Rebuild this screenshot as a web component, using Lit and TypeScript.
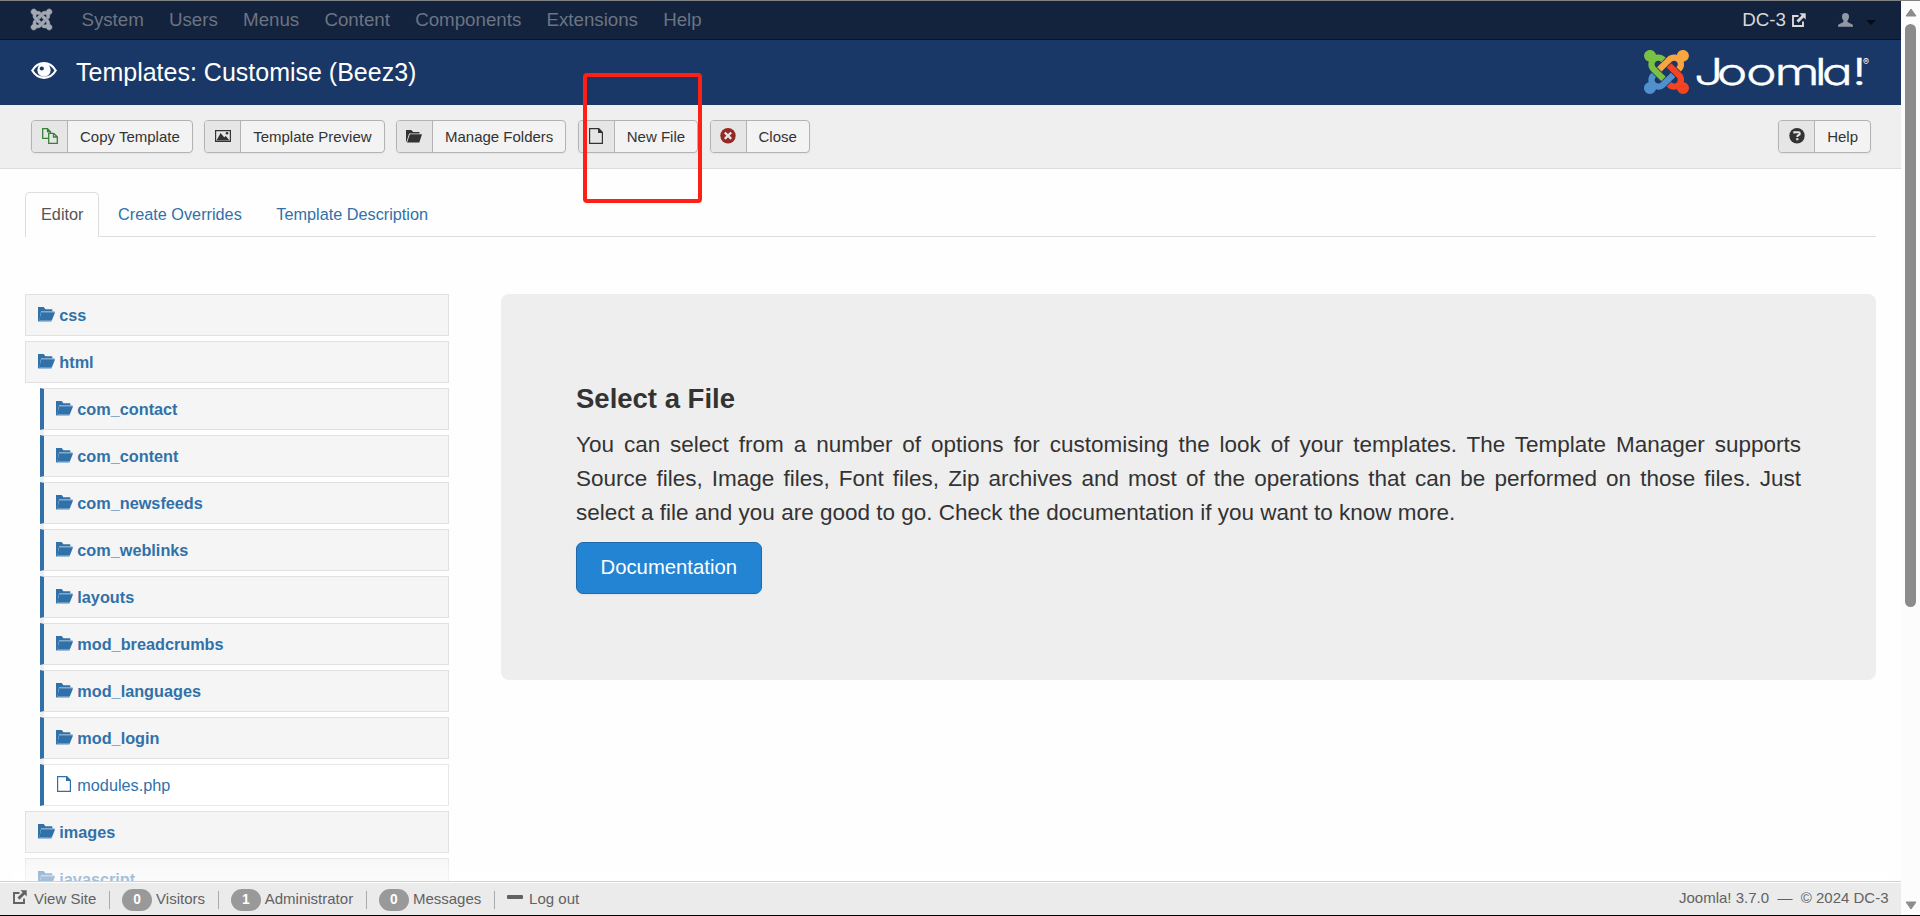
import { LitElement, html, svg, css } from "lit";
import { customElement, property } from "lit/decorators.js";

const JOOMLA = [
  ["#7ac143", "M.6 92.1C.6 58.8 27.4 32 60.4 32c30 0 54.5 21.9 59.2 50.2 32.6-7.6 67.1.6 96.5 30l-44.3 44.3c-20.5-20.5-42.6-16.3-55.4-3.5-14.3 14.3-14.3 37.9 0 52.2l99.5 99.5-44 44.3c-87.7-87.2-49.7-49.7-99.8-99.7-26.8-26.5-35-64.8-24.8-98.9C20.4 144.6.6 120.7.6 92.1z"],
  ["#f9a541", "M130.1 208.5l44.3 44.3c10-10 89.7-89.7 99.7-99.8 14.3-14.3 37.6-14.3 51.9 0 12.8 12.8 17 35-3.5 55.4l44 44.3c31.2-31.2 38.5-67.6 28.9-101.2 29.2-4.1 51.9-29.2 51.9-59.5 0-33.2-26.8-60.1-59.8-60.1-30.3 0-55.4 22.5-59.5 51.6-33.8-9.9-71.7-1.5-98.3 25.1-18.3 19.1-71.1 71.5-99.6 99.9z"],
  ["#f44321", "M396.4 360.7c8.2-32.7-.9-68.5-26.3-93.9-11.8-12.2 5 4.7-99.5-99.7l-44.3 44.3 99.7 99.7c14.3 14.3 14.3 37.6 0 51.9-12.8 12.8-35 17-55.4-3.5l-44 44.3c27.6 30.2 68 38.8 102.7 28 5.5 27.4 29.7 48.1 58.9 48.1 33 0 59.8-26.8 59.8-60.1 0-30.2-22.5-55-51.6-59.1z"],
  ["#5091cd", "M312.1 307.6l-44-44.3c-87 86.4-50.4 50.4-99.7 99.8-14.3 14.3-37.6 14.3-51.9 0-13.1-13.4-16.9-35.3 3.2-55.4l-44-44.3c-30.2 30.2-38 65.2-29.5 98.3-26.7 6-46.2 29.9-46.2 58.2C0 453.2 26.8 480 59.8 480c28.6 0 52.5-19.8 58.6-46.7 32.7 8.2 68.5-.6 94.2-26 32.1-32 12.2-12.4 99.5-99.7z"],
];

const ICONS: Record<string, [number, number, unknown]> = {
  joomla: [21, 21, svg`<g transform="translate(0 -1.500) scale(.0469)" fill="currentColor" stroke="currentColor" stroke-width="13">${JOOMLA.map(([, d]) => svg`<path d=${d} />`)}</g>`],
  eye: [26, 17, svg`<path fill="none" stroke="currentColor" stroke-width="2.200" d="M1.300 8.500C4 3.900 8 1.200 13 1.200s9 2.700 11.700 7.300C22 13.100 18 15.800 13 15.800S4 13.100 1.300 8.500z"/><circle cx="13" cy="8" r="6.700" fill="currentColor"/><circle cx="10.800" cy="6.500" r="2.100" fill="#1a3867"/>`],
  copy: [16, 16, svg`<path fill="none" stroke="currentColor" stroke-width="1.300" d="M6 10.300H.7V.7h4.800l3 3V5M5.500.7v3h3M6.700 5.300h5l3.600 3.500v6.500H6.700zM11.500 5.300v3.700h3.800"/>`],
  image: [16, 12, svg`<path fill="none" stroke="currentColor" stroke-width="1.200" d="M.6.6h14.800v10.800H.6z"/><path fill="currentColor" d="M1.500 10.500 5.600 3l3.600 4.200 1.600-1.300 3.700 4.600z"/><circle cx="12" cy="3.200" r="1.300" fill="currentColor"/>`],
  folder: [16, 13, svg`<path fill="currentColor" d="M0 0h5.300l1.800 1.900h6.400v1.500H3.100L.9 10.500 0 12.200z"/><path fill="currentColor" d="M3.800 4.300H16L13.300 12.500H1.100z"/>`],
  treefolder: [17, 15, svg`<path fill="currentColor" d="M0 0h5.700l1.700 2.300h6.900v2H3L1.400 14H0z"/><path fill="currentColor" opacity=".55" d="M2.300 4.200h14.300v2H2.300zM0 13.200h13.500v1.500H0z"/><path fill="currentColor" d="M3 5.400h14L13.800 13.500H1.300z"/>`],
  file: [14, 16, svg`<path fill="none" stroke="currentColor" stroke-width="1.200" d="M.6.6h9l3.800 3.800v10.900H.6z"/><path fill="currentColor" d="M9 .3h1l3.700 3.700v1H9z"/>`],
  close: [16, 16, svg`<circle cx="8" cy="7.700" r="7.700" fill="currentColor"/><path stroke="#e6e6e6" stroke-width="2.300" d="M4.800 4.500l6.400 6.400M11.200 4.500l-6.400 6.400"/>`],
  help: [16, 16, svg`<circle cx="8" cy="7.700" r="7.700" fill="currentColor"/><path fill="none" stroke="#e6e6e6" stroke-width="2" d="M5.300 5.600V4.200h4.200q1.300 0 1.300 1.200 0 1.300-1.100 1.600-1.400.4-1.400 1.900"/><path fill="#e6e6e6" d="M7.200 10.200h2.200v2H7.200z"/>`],
  out: [14, 14, svg`<path fill="none" stroke="currentColor" stroke-width="1.900" d="M6.500 3H1v10h10V8.500"/><path fill="currentColor" d="M7.500.3H13.700V6.500L11.600 4.500 6.500 9.700 4.500 7.600 9.600 2.400z"/>`],
  user: [15, 14, svg`<path fill="currentColor" d="M7.500 0C9.800 0 11 1.400 11 3.500c0 1.600-.6 3-1.500 3.900v1.700l5 2.500q.5.300.5 2.100H0q0-1.800.5-2.100l5-2.500V7.400C4.600 6.500 4 5.100 4 3.500 4 1.400 5.200 0 7.500 0z"/>`],
  minus: [16, 4, svg`<rect width="16" height="4" rx="1" fill="currentColor"/>`],
};

const icon = (name: string) => {
  const [w, h, body] = ICONS[name];
  return html`<svg class="icon" width=${w} height=${h} viewBox="0 0 ${w} ${h}">${body}</svg>`;
};

const base = css`
  * { box-sizing: border-box; }
  .icon { display: block; flex: none; overflow: visible; }
`;

@customElement("tool-button")
class ToolButton extends LitElement {
  @property() icon = "";
  @property() label = "";
  @property() tone = "#333";
  static styles = [base, css`
    :host { display: block; }
    .btn { display: flex; height: 33px; border: 1px solid #b3b3b3; border-radius: 4px; background: #f3f3f3; color: #333; font: 15px/31px "Liberation Sans", Arial, sans-serif; box-shadow: 0 1px 2px rgba(0,0,0,.05); white-space: nowrap; overflow: hidden; }
    .cell { display: flex; justify-content: center; align-items: center; width: 36px; padding-bottom: 1px; background: #e6e6e6; border-right: 1px solid #b3b3b3; }
    .label { padding: 0 12px; }
  `];
  render() {
    return html`<div class="btn"><span class="cell" style="color:${this.tone}">${icon(this.icon)}</span><span class="label">${this.label}</span></div>`;
  }
}

@customElement("file-tree")
class FileTree extends LitElement {
  static styles = [base, css`
    :host { display: block; width: 424px; }
    .list { display: flex; flex-direction: column; gap: 5px; }
    .nested { margin-left: 15px; background: linear-gradient(#eee, #eee) left / 4px 100% no-repeat; }
    .row { display: flex; gap: 4.300px; height: 42px; padding-left: 12px; border: 1px solid #e1e1e1; background: #f5f5f5; color: #3071a9; font: bold 16.250px/40px "Liberation Sans", Arial, sans-serif; }
    .row .icon { margin-top: 12px; }
    .nested .row { border-left: 4px solid #3071a9; }
    .row.file { background: #fff; font-weight: normal; border-color: #e8e8e8; border-left-color: #3071a9; padding-left: 13px; }
    .row.file .icon { margin: 11px 2px 0 0; }
  `];
  row(name: string) {
    const file = name.includes(".");
    return html`<div class="row ${file ? "file" : ""}">${icon(file ? "file" : "treefolder")}<span>${name}</span></div>`;
  }
  render() {
    const sub = ["com_contact", "com_content", "com_newsfeeds", "com_weblinks", "layouts", "mod_breadcrumbs", "mod_languages", "mod_login", "modules.php"];
    return html`<div class="list">
      ${["css", "html"].map((n) => this.row(n))}
      <div class="list nested">${sub.map((n) => this.row(n))}</div>
      ${["images", "javascript"].map((n) => this.row(n))}
    </div>`;
  }
}

@customElement("app-root")
class AppRoot extends LitElement {
  static styles = [base, css`
    :host { display: block; width: 1920px; height: 916px; overflow: hidden; position: relative; font-family: "Liberation Sans", Arial, sans-serif; font-size: 16.250px; color: #333; }
    .window { display: flex; height: 916px; border-top: 1px solid #7f8183; border-bottom: 1px solid #000; background: #fefefe; }
    .page { width: 1901px; height: 914px; display: flex; flex-direction: column; }
    .nav { flex: none; height: 39px; display: flex; align-items: center; padding: 0 25px 0 31px; background: #13223d; border-bottom: 1px solid #0b1525; color: #6b7482; font-size: 18.750px; letter-spacing: -.02px; }
    .nav .joomla { color: #a3a9b3; margin-right: 29.400px; padding-bottom: 1px; }
    .nav .menu { display: flex; gap: 25.200px; padding-bottom: 1px; }
    .nav .site { display: flex; gap: 6px; align-items: center; margin-left: auto; color: #d9d9d9; padding-bottom: 1px; }
    .nav .user { margin-left: 32px; color: #9098a4; }
    .caret { margin-left: 13px; border: 5px solid transparent; border-top-color: #060b14; border-bottom: 0; margin-top: 5px; }
    .header { flex: none; height: 65px; display: flex; align-items: center; padding: 0 30px 0 31px; background: #1a3867; color: #fff; }
    .header .eye { padding-bottom: 5px; }
    .title { margin: 0 0 2px 19px; font-weight: normal; font-size: 25px; line-height: 30px; }
    .brand { margin: 0 0 2px auto; display: block; overflow: visible; }
    .brand text { font-family: Inter, "Noto Sans", sans-serif; fill: #fff; }
    .word { font-size: 37px; font-weight: 300; font-feature-settings: "cv11"; stroke: #fff; stroke-width: .4px; }
    .reg { font-size: 9px; }
    .toolbar { flex: none; height: 64px; display: flex; gap: 11.400px; padding: 15px 30px 0 31px; background: #efefef; border-bottom: 1px solid #dcdcdc; }
    .toolbar .last { margin-left: auto; }
    .body { flex: 1; min-height: 0; overflow: hidden; padding: 23px 25px 0; }
    .tabs { display: flex; height: 45px; border-bottom: 1px solid #ddd; color: #3071a9; line-height: 42px; }
    .tab { padding: 0 15px; margin-right: 2.500px; border: 1px solid transparent; }
    .tab.active { height: 45px; margin-right: 2.600px; border-color: #ddd; border-bottom: 0; border-radius: 5px 5px 0 0; color: #555; background: #fefefe; }
    .cols { display: flex; gap: 52px; padding-top: 57px; align-items: flex-start; }
    .hero { width: 1375px; height: 386px; background: #eee; border-radius: 8px; padding: 85px 75px 0; }
    .hero h2 { margin: 0; font-size: 27.500px; line-height: 40px; }
    .hero p { margin: 9px 0 12px; font-size: 22.500px; line-height: 34px; text-align: justify; }
    .doc { display: inline-block; height: 52px; padding: 0 23.500px; border: 1px solid #1f6aab; border-radius: 7px; background: #2384d3; color: #fff; font-size: 20.310px; line-height: 48px; box-shadow: 0 1px 2px rgba(0,0,0,.05); }
    .status { position: relative; flex: none; height: 34px; display: flex; align-items: center; padding: 0 12.500px 0 13px; background: #ebebeb; border-top: 1px solid #d0d0d0; box-shadow: inset 0 1px 0 #fff, 0 -19px 19px rgba(255,255,255,.6); color: #626262; font-size: 15px; }
    .status .out { margin: 0 7px 3px 0; }
    .sep { width: 1px; height: 18px; background: #aaa; margin: 3px 12px 0 12.800px; }
    .badge { width: 30px; height: 22px; border-radius: 11px; background: #999; color: #fff; font-weight: bold; line-height: 21px; text-align: center; margin: 3px 4px 0 0; font-size: 13.750px; }
    .minus { margin: 0 6px 3px 0; }
    .copy-note { margin-left: auto; white-space: pre; padding-bottom: 2px; }
    .scroll { width: 19px; display: flex; flex-direction: column; align-items: center; padding: 7px 0 5px; background: #fcfcfc; }
    .thumb { width: 11px; height: 583px; border-radius: 6px; background: #8b8b8b; margin: 7px 0 auto; }
    .marker { position: absolute; left: 583px; top: 73px; width: 119px; height: 130px; border: 4px solid #ff2015; border-radius: 4px; }
  `];

  render() {
    const menu = ["System", "Users", "Menus", "Content", "Components", "Extensions", "Help"];
    const counts = [["0", "Visitors"], ["1", "Administrator"], ["0", "Messages"]];
    return html`
      <div class="window">
        <div class="page">
          <nav class="nav">
            <span class="joomla">${icon("joomla")}</span>
            <div class="menu">${menu.map((m) => html`<span>${m}</span>`)}</div>
            <span class="site">DC-3 ${icon("out")}</span>
            <span class="user">${icon("user")}</span>
            <span class="caret"></span>
          </nav>
          <header class="header">
            <span class="eye">${icon("eye")}</span>
            <h1 class="title">Templates: Customise (Beez3)</h1>
            <svg class="brand" width="227" height="46" viewBox="0 0 227 46">
              <g transform="translate(0 -2.200) scale(.1004 .0982)">${JOOMLA.map(([c, d]) => svg`<path fill=${c} d=${d} />`)}</g>
              <text class="word" transform="scale(1.400 1)" x="35.800 52 72.900 93.200 122 127 148.500" y="36.500">Joomla!</text>
              <text class="reg" x="219" y="16">®</text>
            </svg>
          </header>
          <div class="toolbar">
            <tool-button icon="copy" label="Copy Template" tone="#378137"></tool-button>
            <tool-button icon="image" label="Template Preview"></tool-button>
            <tool-button icon="folder" label="Manage Folders"></tool-button>
            <tool-button icon="file" label="New File"></tool-button>
            <tool-button icon="close" label="Close" tone="#942a25"></tool-button>
            <tool-button class="last" icon="help" label="Help"></tool-button>
          </div>
          <main class="body">
            <div class="tabs">
              <span class="tab active">Editor</span>
              <span class="tab">Create Overrides</span>
              <span class="tab">Template Description</span>
            </div>
            <div class="cols">
              <file-tree></file-tree>
              <section class="hero">
                <h2>Select a File</h2>
                <p>You can select from a number of options for customising the look of your templates. The Template Manager supports Source files, Image files, Font files, Zip archives and most of the operations that can be performed on those files. Just select a file and you are good to go. Check the documentation if you want to know more.</p>
                <span class="doc">Documentation</span>
              </section>
            </div>
          </main>
          <footer class="status">
            <span class="out">${icon("out")}</span><span>View Site</span><span class="sep"></span>
            ${counts.map(([n, t]) => html`<span class="badge">${n}</span><span>${t}</span><span class="sep"></span>`)}
            <span class="minus">${icon("minus")}</span><span>Log out</span>
            <span class="copy-note">Joomla! 3.7.0  —  © 2024 DC-3</span>
          </footer>
        </div>
        <div class="scroll">
          <svg width="12" height="9"><path d="M6 1 11 8H1z" fill="#8b8b8b" stroke="#8b8b8b" stroke-linejoin="round"/></svg>
          <div class="thumb"></div>
          <svg width="12" height="9"><path d="M6 8 11 1H1z" fill="#8b8b8b" stroke="#8b8b8b" stroke-linejoin="round"/></svg>
        </div>
      </div>
      <div class="marker"></div>
    `;
  }
}
